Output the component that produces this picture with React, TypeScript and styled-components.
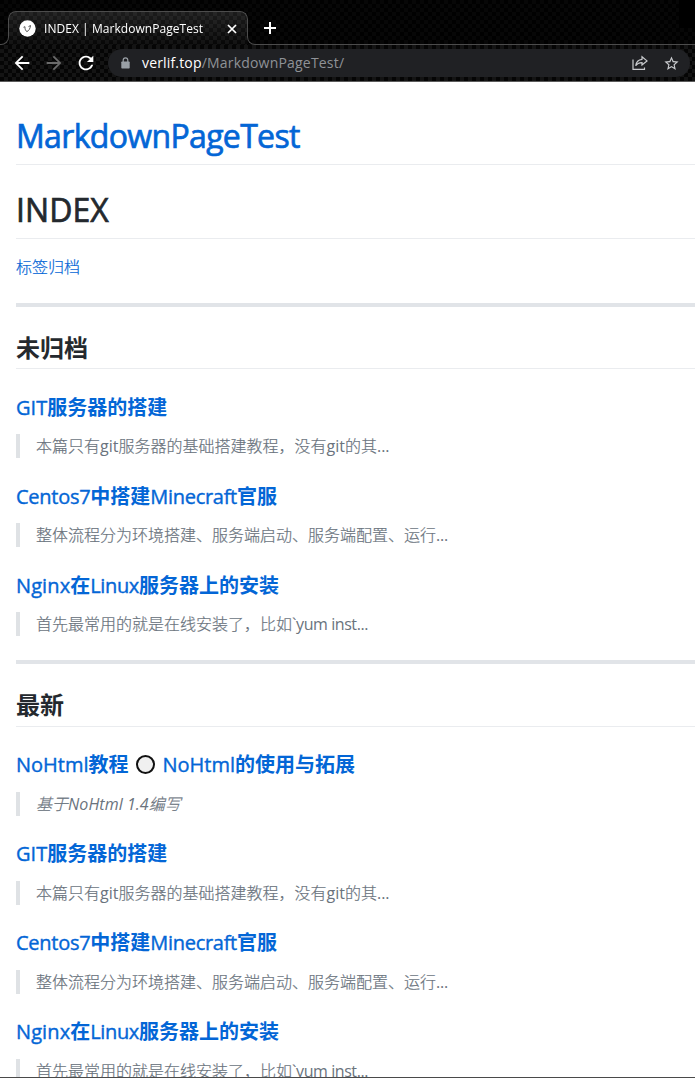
import React from 'react';
import styled, { createGlobalStyle } from 'styled-components';
import { MdArrowBack, MdArrowForward, MdRefresh, MdStarBorder } from 'react-icons/md';

const GlobalStyle = createGlobalStyle`
  * { box-sizing: border-box; }
  body { margin: 0; background: #fff; }
`;

const latin = `"Open Sans", "Noto Sans CJK SC", sans-serif`;
const chinese = `"Noto Sans CJK SC", "Open Sans", sans-serif`;

const Window = styled.div`
  height: 1078px;
  display: flex;
  flex-direction: column;
  overflow: hidden;
  border-bottom: 1px solid #4a4a4a;
  font-family: ${latin};
`;

const TabStrip = styled.div`
  flex: none;
  height: 45px;
  display: flex;
  align-items: flex-end;
  background-color: #000;
  background-image: conic-gradient(#070707 25%, #010101 0 50%, #070707 0 75%, #010101 0);
  background-size: 8px 8px;
`;

const Foot = styled.span<{ $side: 'left' | 'right' }>`
  flex: none;
  width: 9px;
  height: 9px;
  margin-${({ $side }) => ($side === 'left' ? 'right' : 'left')}: -1px;
  border: 0 solid #4c4c4c;
  border-bottom-width: 1px;
  border-${({ $side }) => ($side === 'left' ? 'right' : 'left')}-width: 1px;
  border-bottom-${({ $side }) => ($side === 'left' ? 'right' : 'left')}-radius: 8px;
`;

const Tab = styled.div`
  flex: none;
  width: 240px;
  height: 34px;
  display: flex;
  align-items: center;
  padding: 0 9px 0 10px;
  border: 1px solid #4c4c4c;
  border-bottom: 0;
  border-radius: 8px 8px 0 0;
  color: #fff;
  background-image:
    linear-gradient(rgba(255, 255, 255, 0.1), rgba(255, 255, 255, 0.02)),
    conic-gradient(#0e0e0e 25%, #020202 0 50%, #0e0e0e 0 75%, #020202 0);
  background-size: 100% 100%, 8px 8px;
  mask: linear-gradient(#000 0 0) 0 0 / 100% 26px no-repeat,
    linear-gradient(#000 0 0) 50% 0 / 238px 100% no-repeat;
`;

const TabTitle = styled.span`
  flex: 1;
  margin-left: 8px;
  font-size: 12px;
  line-height: 16px;
  letter-spacing: 0.05px;
  white-space: nowrap;
`;

const StripRest = styled.div`
  flex: 1;
  height: 100%;
  display: flex;
  align-items: flex-start;
  justify-content: space-between;
  border-bottom: 1px solid #4c4c4c;
`;

const NewTab = styled.span`
  display: flex;
  margin: 22px 0 0 8px;
`;

const StripEnd = styled.span`
  width: 16px;
  height: 28px;
  background: #000;
`;

const Toolbar = styled.div`
  flex: none;
  height: 37px;
  display: flex;
  align-items: center;
  gap: 10px;
  padding: 0 5px 0 11px;
  border-bottom: 1px solid #5c5c5c;
  color: #fff;
  background-image: conic-gradient(#141414 25%, #050505 0 50%, #141414 0 75%, #050505 0);
  background-size: 8px 8px;
`;

const NavIcon = styled.span<{ $dim?: boolean }>`
  width: 22px;
  display: flex;
  justify-content: flex-start;
  color: ${({ $dim }) => ($dim ? '#6b6b6b' : '#fff')};
`;

const AddressBar = styled.div`
  flex: 1;
  height: 28px;
  margin-left: 1px;
  padding: 0 10px 0 13px;
  display: flex;
  align-items: center;
  border-radius: 14px;
  background: #202124;
  color: #c9cbce;
`;

const LockIcon = styled.svg`
  margin-right: 12px;
  color: #9aa0a6;
`;

const Address = styled.span`
  flex: 1;
  font-size: 14px;
  line-height: 20px;
  letter-spacing: 0.2px;
  color: #8f9297;
`;

const Host = styled.span`
  color: #fff;
  letter-spacing: 0.16px;
`;

const ShareIcon = styled.svg`
  margin-right: 15px;
`;

const Article = styled.main`
  flex: 1;
  min-height: 0;
  overflow: hidden;
  padding: 32px 0 0 16px;
  color: #24292e;
  font-size: 16px;
  line-height: 24px;
`;

const Title = styled.h1`
  margin: 0 0 24px;
  padding: 1.5px 0 8.1px;
  border-bottom: 1px solid #eaecef;
  font-size: 32px;
  font-weight: 400;
  line-height: 40px;
  -webkit-text-stroke: 0.7px;

  & + p { margin-top: -8px; }
`;

const Paragraph = styled.p`
  margin: 0;
  height: 24px;
  font-family: ${chinese};
  font-weight: 300;
  line-height: 22px;
  -webkit-text-stroke: 0.2px;
`;

const Link = styled.a`
  color: #0366d6;
  text-decoration: none;
`;

const Divider = styled.hr`
  height: 4px;
  margin: 24px 0;
  border: 0;
  background: #e1e4e8;
`;

const Section = styled.h2`
  margin: 24px 0;
  padding: 0.5px 0 6.7px;
  border-bottom: 1px solid #eaecef;
  font: 700 24px/30px ${chinese};
`;

const Entry = styled.h3`
  margin: 24px 0 16px;
  display: flex;
  align-items: center;
  height: 25px;
  padding-top: 2px;
  font: 700 20px/25px ${chinese};
  white-space: pre;
`;

const Quote = styled.blockquote`
  margin: 0;
  height: 24px;
  padding-left: 16px;
  border-left: 4px solid #dfe2e5;
  color: #6a737d;
  font-family: ${chinese};
  font-weight: 300;
  line-height: 22px;
  white-space: nowrap;
  -webkit-text-stroke: 0.2px;
`;

const Latin = styled.span<{ $track?: number; $weight?: 'title' | 'strong' | 'plain' }>`
  font-family: ${latin};
  font-weight: 400;
  letter-spacing: ${({ $track = 0 }) => $track}px;
  -webkit-text-stroke: ${({ $weight = 'plain' }) => ({ title: 0.7, strong: 0.4, plain: 0 })[$weight]}px;
`;

const Circle = styled.span`
  width: 19px;
  height: 19px;
  margin: 0 2px 0 2.5px;
  border: 2px solid #111;
  border-radius: 50%;
  background: #f0f0f0;
`;

type Run = { text: string; track?: number } | string;

const Runs = ({ runs, strong }: { runs: Run[]; strong?: boolean }) => (
  <>
    {runs.map((run, i) =>
      typeof run === 'string' ? (
        <React.Fragment key={i}>{run}</React.Fragment>
      ) : (
        <Latin key={i} $track={run.track} $weight={strong ? 'strong' : 'plain'}>{run.text}</Latin>
      ),
    )}
  </>
);

const posts: { title: Run[]; summary: Run[] }[] = [
  {
    title: [{ text: 'GIT' }, '服务器的搭建'],
    summary: ['本篇只有', { text: 'git' }, '服务器的基础搭建教程，没有', { text: 'git' }, '的其', { text: '...' }],
  },
  {
    title: [{ text: 'Centos7', track: -0.27 }, '中搭建', { text: 'Minecraft', track: -0.3 }, '官服'],
    summary: ['整体流程分为环境搭建、服务端启动、服务端配置、运行', { text: '...', track: -0.2 }],
  },
  {
    title: [{ text: 'Nginx', track: 0.1 }, '在', { text: 'Linux', track: -0.35 }, '服务器上的安装'],
    summary: ['首先最常用的就是在线安装了，比如', { text: '`yum inst...', track: -0.42 }],
  },
];

const PostList = () => (
  <>
    {posts.map((post, i) => (
      <React.Fragment key={i}>
        <Entry><Link><Runs runs={post.title} strong /></Link></Entry>
        <Quote><Runs runs={post.summary} /></Quote>
      </React.Fragment>
    ))}
  </>
);

export default function App() {
  return (
    <Window>
      <GlobalStyle />
      <TabStrip>
        <Foot $side="left" />
        <Tab>
          <svg width="17" height="17" viewBox="0 0 17 17">
            <circle cx="8.5" cy="8.5" r="8.2" fill="#fff" />
            <path d="M4.5 7.300l1.400-.6c0 2.300.7 4.200 2 4.900 1.900-.8 3.400-3 3.600-6.100l-2 1.100" fill="none" stroke="#555" />
          </svg>
          <TabTitle>INDEX | MarkdownPageTest</TabTitle>
          <svg width="12" height="12" viewBox="0 0 12 12">
            <path d="M2 2l8 8M10 2l-8 8" stroke="#fff" strokeWidth="1.7" />
          </svg>
        </Tab>
        <Foot $side="right" />
        <StripRest>
          <NewTab>
            <svg width="12" height="12" viewBox="0 0 12 12">
              <path d="M6 0v12M0 6h12" stroke="#fff" strokeWidth="2" />
            </svg>
          </NewTab>
          <StripEnd />
        </StripRest>
      </TabStrip>
      <Toolbar>
        <NavIcon><MdArrowBack size={22} /></NavIcon>
        <NavIcon $dim><MdArrowForward size={22} /></NavIcon>
        <NavIcon><MdRefresh size={22} /></NavIcon>
        <AddressBar>
          <LockIcon width="9" height="12" viewBox="0 0 9 12">
            <rect x="0.3" y="4.500" width="8.400" height="7" rx="0.8" fill="currentColor" />
            <path d="M2.200 5V3.200a2.300 2.300 0 0 1 4.600 0V5" fill="none" stroke="currentColor" strokeWidth="1.200" />
          </LockIcon>
          <Address><Host>verlif.top</Host>/MarkdownPageTest/</Address>
          <ShareIcon width="16" height="16" viewBox="0 0 16 16" fill="none" stroke="currentColor" strokeWidth="1.200">
            <path d="M1 4.500v9.900h11.500v-2" />
            <path d="M10 1.800l5 4.100-5 4.100V7.600c-3 0-5 .9-6.300 3.200C4.200 7 6.500 4.700 10 4.300z" />
          </ShareIcon>
          <MdStarBorder size={17} />
        </AddressBar>
      </Toolbar>
      <Article>
        <Title><Link><Latin $track={-0.66} $weight="title">MarkdownPageTest</Latin></Link></Title>
        <Title><Latin $track={0.05} $weight="title">INDEX</Latin></Title>
        <Paragraph><Link>标签归档</Link></Paragraph>
        <Divider />
        <Section>未归档</Section>
        <PostList />
        <Divider />
        <Section>最新</Section>
        <Entry>
          <Link><Runs runs={[{ text: 'NoHtml' }, '教程', { text: ' ' }]} strong /></Link>
          <Circle />
          <Link><Runs runs={[{ text: ' NoHtml' }, '的使用与拓展']} strong /></Link>
        </Entry>
        <Quote><em><Runs runs={['基于', { text: 'NoHtml 1.4', track: 0.05 }, '编写']} /></em></Quote>
        <PostList />
      </Article>
    </Window>
  );
}
